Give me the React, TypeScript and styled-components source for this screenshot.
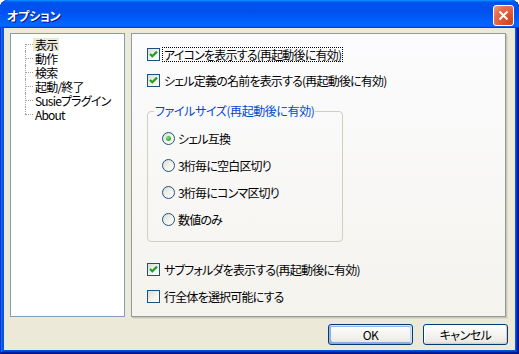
import React from "react";
import styled, { createGlobalStyle, css } from "styled-components";

const GlobalStyle = createGlobalStyle`
  html, body { margin: 0; padding: 0; background: #ffffff; }
  body {
    font-family: "Noto Sans CJK JP", "Noto Sans", sans-serif;
    font-size: 12px;
    color: #000;
    font-feature-settings: "palt";
    letter-spacing: -0.8px;
  }
  * { box-sizing: border-box; }
`;

const Window = styled.div`
  width: 519px;
  height: 354px;
  display: flex;
  flex-direction: column;
  background: #0055e5;
  border-radius: 8px 8px 0 0;
  overflow: hidden;
  box-shadow: inset -1px -1px #00138c, inset 1px 1px #0831d9,
    inset -2px -2px #001ea0, inset 2px 2px #166aee, inset -3px -3px #003bda,
    inset 3px 3px #0855dd;
`;

const TitleBar = styled.div`
  height: 28px;
  flex: none;
  display: flex;
  align-items: center;
  padding: 3px 5px 0 7px;
  background: linear-gradient(
    180deg,
    #0997ff,
    #0053ee 8%,
    #0050ee 40%,
    #06f 88%,
    #06f 93%,
    #005bff 95%,
    #003dd7 96%,
    #003dd7
  );
  border-radius: 8px 8px 0 0;
`;

const Title = styled.div`
  flex: 1;
  color: #fff;
  font-weight: bold;
  font-size: 12px;
  line-height: 14px;
  letter-spacing: -0.2px;
  text-shadow: 1px 1px #0f1089;
`;

const CloseButton = styled.div`
  width: 21px;
  height: 21px;
  border: 1px solid #fff;
  border-radius: 3px;
  background: radial-gradient(circle at 85% 85%, #cc4622 0%, #e0522f 35%, #e57050 70%, #f0a08a 100%);
  display: flex;
  align-items: center;
  justify-content: center;
`;

const Body = styled.div`
  flex: 1;
  margin: 0 4px 4px 4px;
  background: #ece9d8;
  padding: 5px 7px 5px 6px;
  display: flex;
  flex-direction: column;
`;

const MainRow = styled.div`
  display: flex;
  height: 284px;
  gap: 6px;
`;

const Tree = styled.ul`
  width: 115px;
  margin: 0;
  list-style: none;
  border: 1px solid #7f9db9;
  background: #fff;
  padding: 3px 0 0 0;
`;

const TreeRow = styled.li`
  height: 14px;
  display: flex;
  align-items: center;
  padding-left: 14px;
`;

const Connector = styled.span<{ $first?: boolean; $last?: boolean }>`
  position: relative;
  width: 8px;
  height: 14px;
  flex: none;
  &::before {
    content: "";
    position: absolute;
    left: 0;
    top: ${(p) => (p.$first ? "7px" : "0")};
    bottom: ${(p) => (p.$last ? "7px" : "0")};
    border-left: 1px dotted #a0a0a0;
  }
  &::after {
    content: "";
    position: absolute;
    left: 0;
    top: 7px;
    width: 8px;
    border-top: 1px dotted #a0a0a0;
  }
`;

const TreeLabel = styled.span<{ $selected?: boolean }>`
  display: block;
  height: 13px;
  padding: 0 2px;
  line-height: 13px;
  white-space: nowrap;
  background: ${(p) => (p.$selected ? "#ece9d8" : "transparent")};
`;

const Panel = styled.div`
  flex: 1;
  margin-right: 2px;
  border: 1px solid #919b9c;
  background: linear-gradient(180deg, #fcfcfe 0%, #f4f3ee 100%);
  box-shadow: 1px 1px 0 #c9c6b5, 2px 2px 0 #dedbcb;
  padding: 12px 0 0 15px;
  display: flex;
  flex-direction: column;
  align-items: flex-start;
`;

const Option = styled.label<{ $gap?: number }>`
  display: flex;
  align-items: center;
  height: 16px;
  gap: 2px;
  margin-top: ${(p) => p.$gap ?? 0}px;
  white-space: nowrap;
`;

const boxBase = css`
  width: 13px;
  height: 13px;
  flex: none;
  border: 1px solid #1c5180;
  background: linear-gradient(135deg, #dcdcd7 0%, #f4f4f0 60%, #ffffff 100%);
  display: flex;
  align-items: center;
  justify-content: center;
`;

const CheckBox = styled.span`
  ${boxBase};
`;

const RadioCircle = styled.span`
  ${boxBase};
  border-radius: 50%;
`;

const RadioDot = styled.span`
  width: 5px;
  height: 5px;
  border-radius: 50%;
  background: radial-gradient(circle at 35% 35%, #7be07b 0%, #3fbf3f 50%, #1a9a1a 100%);
`;

const OptionText = styled.span<{ $focus?: boolean }>`
  line-height: 13px;
  padding: 0 1px;
  border: 1px dotted ${(p) => (p.$focus ? "#000" : "transparent")};
`;

const Group = styled.fieldset`
  margin: 16px 0 0 0;
  width: 196px;
  border: 1px solid #d0d0bf;
  border-radius: 4px;
  padding: 12px 0 14px 14px;
  display: flex;
  flex-direction: column;
  gap: 11px;
`;

const Legend = styled.legend`
  color: #0046d5;
  padding: 0 1px;
  margin-left: -8px;
  line-height: 14px;
  letter-spacing: -0.4px;
`;

const RadioOption = styled.label`
  display: flex;
  align-items: center;
  height: 16px;
  gap: 3px;
  white-space: nowrap;
`;

const Footer = styled.div`
  margin-top: 7px;
  display: flex;
  justify-content: flex-end;
  gap: 10px;
`;

const Button = styled.button<{ $default?: boolean }>`
  width: 85px;
  height: 21px;
  font: inherit;
  font-size: 12px;
  letter-spacing: -0.5px;
  color: #000;
  border: 1px solid #003c74;
  border-radius: 3px;
  padding: 0;
  background: linear-gradient(180deg, #fff, #ecebe6 86%, #d6d0c5);
  box-shadow: ${(p) =>
    p.$default
      ? "inset -1px 1px #cee7ff, inset 1px 2px #98b8ea, inset -2px 2px #bcd4f6, inset 1px -1px #89ade4, inset 2px -2px #89ade4"
      : "inset -1px -1px #d6d0c5, inset 1px 1px #fff"};
`;

const CheckMark = () => (
  <svg width="11" height="11" viewBox="0 0 11 11">
    <path d="M2 5 L4.3 7.3 L9 2.6" fill="none" stroke="#21a121" strokeWidth="2.2" />
  </svg>
);

const CloseX = () => (
  <svg width="11" height="11" viewBox="0 0 11 11">
    <path d="M1.5 1.5 L9.5 9.5 M9.5 1.5 L1.5 9.5" stroke="#fff" strokeWidth="2" />
  </svg>
);

const treeItems = ["表示", "動作", "検索", "起動/終了", "Susieプラグイン", "About"];
const radios = ["シェル互換", "3桁毎に空白区切り", "3桁毎にコンマ区切り", "数値のみ"];

export default function App() {
  return (
    <>
      <GlobalStyle />
      <Window>
        <TitleBar>
          <Title>オプション</Title>
          <CloseButton>
            <CloseX />
          </CloseButton>
        </TitleBar>
        <Body>
          <MainRow>
            <Tree>
              {treeItems.map((t, i) => (
                <TreeRow key={t}>
                  <Connector $first={i === 0} $last={i === treeItems.length - 1} />
                  <TreeLabel $selected={i === 0}>{t}</TreeLabel>
                </TreeRow>
              ))}
            </Tree>
            <Panel>
              <Option>
                <CheckBox>
                  <CheckMark />
                </CheckBox>
                <OptionText $focus>アイコンを表示する(再起動後に有効)</OptionText>
              </Option>
              <Option $gap={10}>
                <CheckBox>
                  <CheckMark />
                </CheckBox>
                <OptionText>シェル定義の名前を表示する(再起動後に有効)</OptionText>
              </Option>
              <Group>
                <Legend>ファイルサイズ(再起動後に有効)</Legend>
                {radios.map((r, i) => (
                  <RadioOption key={r}>
                    <RadioCircle>{i === 0 && <RadioDot />}</RadioCircle>
                    <span>{r}</span>
                  </RadioOption>
                ))}
              </Group>
              <Option $gap={19}>
                <CheckBox>
                  <CheckMark />
                </CheckBox>
                <OptionText>サブフォルダを表示する(再起動後に有効)</OptionText>
              </Option>
              <Option $gap={11}>
                <CheckBox />
                <OptionText>行全体を選択可能にする</OptionText>
              </Option>
            </Panel>
          </MainRow>
          <Footer>
            <Button $default>OK</Button>
            <Button>キャンセル</Button>
          </Footer>
        </Body>
      </Window>
    </>
  );
}
